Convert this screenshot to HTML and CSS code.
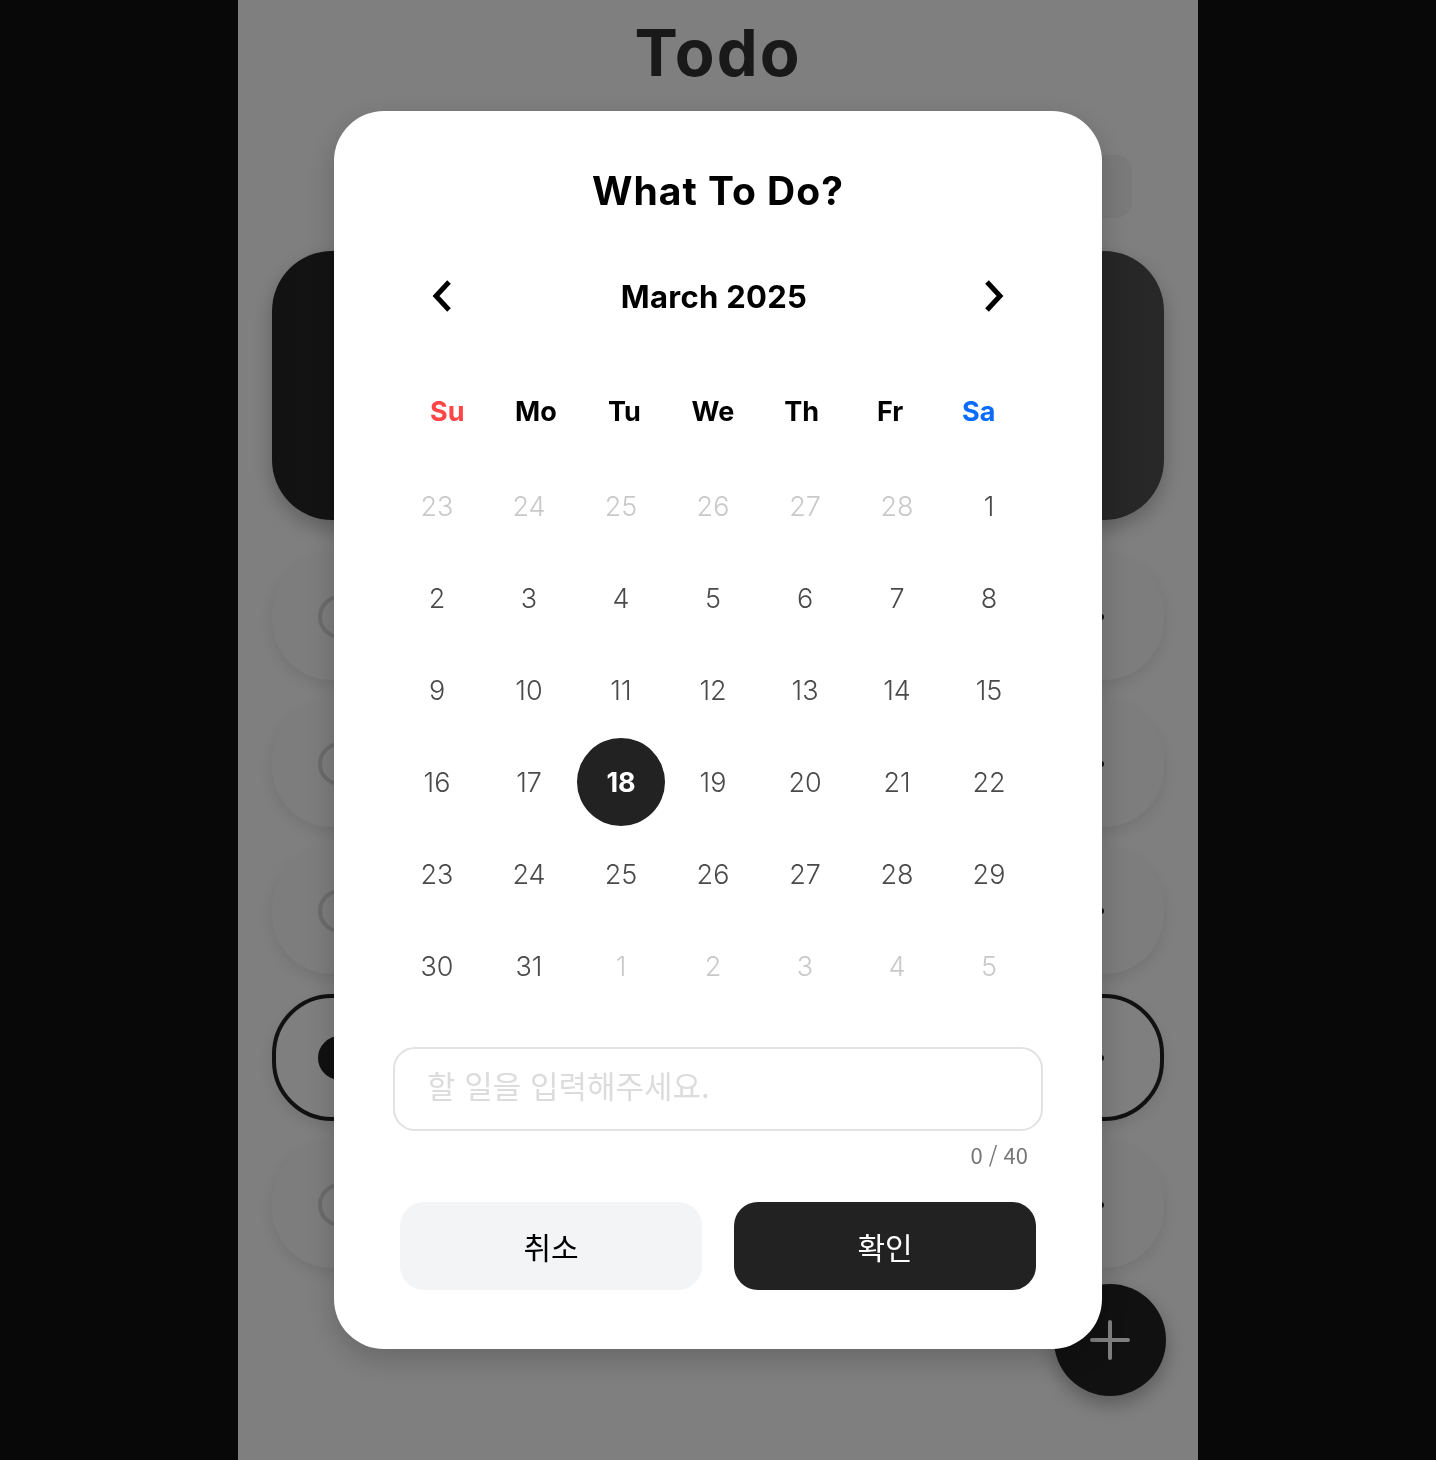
FILE: index.html
```html
<!DOCTYPE html>
<html lang="ko">
<head>
<meta charset="utf-8">
<title>Todo</title>
<link rel="stylesheet" href="styles.css">
</head>
<body>
  <div class="app">
    <h1 class="app-title">Todo</h1>
    <div class="toolbar">
      <div class="filter-btn"></div>
    </div>
    <div class="summary-card"></div>

    <div class="todo-list">
      <div class="todo-item"><span class="check"></span><span class="more"><i></i><i></i><i></i></span></div>
      <div class="todo-item"><span class="check"></span><span class="more"><i></i><i></i><i></i></span></div>
      <div class="todo-item"><span class="check"></span><span class="more"><i></i><i></i><i></i></span></div>
      <div class="todo-item active"><span class="check"></span><span class="more"><i></i><i></i><i></i></span></div>
      <div class="todo-item"><span class="check"></span><span class="more"><i></i><i></i><i></i></span></div>
    </div>

    <button class="fab" title="추가">
      <svg viewBox="0 0 40 40" width="40" height="40">
        <path d="M20 2v36M2 20h36" stroke="#fff" stroke-width="4" stroke-linecap="round"/>
      </svg>
    </button>
  </div>

  <div class="overlay">
    <div class="modal">
      <h2 class="modal-title">What To Do?</h2>

      <div class="month-nav">
        <button class="nav-btn" title="이전 달">
          <svg viewBox="0 0 22 34" width="22" height="34"><polyline points="18,3 5,17 18,31" fill="none" stroke="#000" stroke-width="5"/></svg>
        </button>
        <span class="month-label">March 2025</span>
        <button class="nav-btn" title="다음 달">
          <svg viewBox="0 0 22 34" width="22" height="34"><polyline points="4,3 17,17 4,31" fill="none" stroke="#000" stroke-width="5"/></svg>
        </button>
      </div>

      <div class="weekdays">
        <span class="sun">Su</span><span>Mo</span><span>Tu</span><span>We</span><span>Th</span><span>Fr</span><span class="sat">Sa</span>
      </div>

      <div class="days">
        <span class="other">23</span><span class="other">24</span><span class="other">25</span><span class="other">26</span><span class="other">27</span><span class="other">28</span><span>1</span>
        <span>2</span><span>3</span><span>4</span><span>5</span><span>6</span><span>7</span><span>8</span>
        <span>9</span><span>10</span><span>11</span><span>12</span><span>13</span><span>14</span><span>15</span>
        <span>16</span><span>17</span><span class="selected">18</span><span>19</span><span>20</span><span>21</span><span>22</span>
        <span>23</span><span>24</span><span>25</span><span>26</span><span>27</span><span>28</span><span>29</span>
        <span>30</span><span>31</span><span class="other">1</span><span class="other">2</span><span class="other">3</span><span class="other">4</span><span class="other">5</span>
      </div>

      <input class="todo-input" type="text" maxlength="40" placeholder="할 일을 입력해주세요.">
      <div class="counter">0 / 40</div>

      <div class="actions">
        <button class="btn cancel">취소</button>
        <button class="btn confirm">확인</button>
      </div>
    </div>
  </div>
</body>
</html>
```
FILE: styles.css
```css
* {
  box-sizing: border-box;
}

body {
  margin: 0;
  background: #111;
  font-family: Inter, "Noto Sans CJK KR", sans-serif;
}

.app {
  position: relative;
  width: 960px;
  min-height: 1460px;
  margin: 0 auto;
  padding: 14px 34px 0;
  background: #fff;
}

.app-title {
  margin: 0;
  text-align: center;
  font-size: 65px;
  line-height: 77px;
  font-weight: 700;
  letter-spacing: 2px;
  color: #333;
}

.toolbar {
  display: flex;
  justify-content: flex-end;
  margin: 64px 32px 0;
}

.filter-btn {
  width: 180px;
  height: 63px;
  border-radius: 16px;
  background: #f4f4f4;
}

.summary-card {
  height: 269px;
  margin-top: 33px;
  border-radius: 60px;
  background: linear-gradient(90deg, #242424, #505050);
  box-shadow: 0 8px 20px rgba(0,0,0,0.25);
}

.todo-list {
  display: flex;
  flex-direction: column;
  gap: 20px;
  margin-top: 33px;
}

.todo-item {
  display: flex;
  align-items: center;
  justify-content: space-between;
  height: 127px;
  padding: 0 60px 0 46px;
  border-radius: 60px;
  background: #fafafa;
  box-shadow: 0 6px 16px rgba(0,0,0,0.1);
}

.todo-item.active {
  padding: 0 56px 0 42px;
  background: #fff;
  border: 4px solid #222;
}

.check {
  width: 44px;
  height: 44px;
  border-radius: 50%;
  border: 4px solid #d8d8d8;
}

.active .check {
  background: #222;
  border-color: #222;
}

.more {
  display: flex;
  gap: 5px;
}

.more i {
  width: 6px;
  height: 6px;
  border-radius: 50%;
  background: #222;
}

.fab {
  position: absolute;
  right: 32px;
  bottom: 64px;
  width: 112px;
  height: 112px;
  display: flex;
  align-items: center;
  justify-content: center;
  border: none;
  border-radius: 50%;
  background: #222;
  box-shadow: 0 8px 20px rgba(0,0,0,0.3);
}

.overlay {
  position: fixed;
  inset: 0;
  display: flex;
  align-items: center;
  justify-content: center;
  background: rgba(0,0,0,0.5);
}

.modal {
  width: 768px;
  padding: 52px 59px 59px;
  border-radius: 50px;
  background: #fff;
  box-shadow: 0 10px 30px rgba(0,0,0,0.2);
}

.modal-title {
  margin: 0;
  height: 56px;
  line-height: 56px;
  text-align: center;
  font-size: 39px;
  font-weight: 700;
  letter-spacing: 1px;
  color: #000;
}

.month-nav {
  display: flex;
  align-items: center;
  justify-content: space-between;
  height: 64px;
  margin-top: 45px;
  padding: 0 38px;
}

.nav-btn {
  display: flex;
  padding: 0;
  background: none;
  border: none;
  cursor: pointer;
}

.month-label {
  margin-right: 8px;
  font-size: 31px;
  font-weight: 700;
  letter-spacing: 0.3px;
  color: #000;
}

.weekdays {
  display: grid;
  grid-template-columns: repeat(7, 1fr);
  width: 620px;
  height: 50px;
  margin: 58px 0 0 10px;
  align-items: center;
  text-align: center;
  font-size: 27px;
  font-weight: 700;
  color: #000;
}

.weekdays .sun {
  color: #ff4545;
}

.weekdays .sat {
  color: #0a6cff;
}

.days {
  display: grid;
  grid-template-columns: repeat(7, 92px);
  grid-auto-rows: 92px;
  width: 644px;
  margin: 24px 0 0 -2px;
}

.days span {
  display: flex;
  align-items: center;
  justify-content: center;
  font-size: 27px;
  font-weight: 300;
  color: #4a4a4a;
}

.days .other {
  color: #c9c9c9;
}

.days .selected {
  width: 88px;
  height: 88px;
  margin: 2px;
  border-radius: 50%;
  background: #222;
  color: #fff;
  font-weight: 700;
}

.todo-input {
  display: block;
  width: 100%;
  height: 84px;
  margin-top: 35px;
  padding: 0 32px 9px;
  border: 2px solid #e2e2e2;
  border-radius: 22px;
  font-family: "Noto Sans CJK KR", sans-serif;
  font-size: 31px;
  font-weight: 400;
  outline: none;
}

.todo-input::placeholder {
  color: #dcdcdc;
}

.counter {
  height: 30px;
  margin-top: 10px;
  padding-right: 15px;
  text-align: right;
  line-height: 26px;
  font-family: "Noto Sans CJK KR", sans-serif;
  font-size: 22px;
  color: #777;
}

.actions {
  display: grid;
  grid-template-columns: 1fr 1fr;
  gap: 32px;
  margin: 31px 7px 0;
}

.btn {
  height: 88px;
  border: none;
  border-radius: 24px;
  font-family: "Noto Sans CJK KR", sans-serif;
  font-size: 30px;
  cursor: pointer;
}

.cancel {
  background: #f3f4f6;
  color: #000;
}

.confirm {
  background: #222;
  color: #fff;
}
```
